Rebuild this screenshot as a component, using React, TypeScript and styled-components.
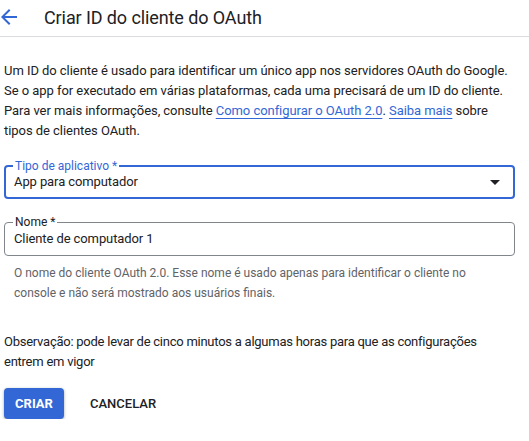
import styled, { createGlobalStyle } from 'styled-components';

const GlobalStyle = createGlobalStyle`
  html, body {
    margin: 0;
    padding: 0;
    background: #fff;
  }
  body {
    font-family: Roboto, "Liberation Sans", Arial, sans-serif;
    color: #202124;
    -webkit-font-smoothing: antialiased;
  }
`;

const Header = styled.header`
  display: flex;
  align-items: center;
  height: 37px;
  border-bottom: 1px solid #dadce0;
  box-sizing: border-box;
  padding-bottom: 2px;
`;

const BackButton = styled.button`
  display: flex;
  align-items: center;
  justify-content: center;
  width: 18px;
  height: 24px;
  padding: 0;
  margin: 0 26px 0 0;
  border: none;
  background: transparent;
  cursor: pointer;
`;

const Title = styled.h1`
  margin: 0;
  font-size: 18px;
  font-weight: 400;
  letter-spacing: -0.1px;
  color: #202124;
`;

const Content = styled.main`
  padding: 24px 14px 0 4px;
`;

const Intro = styled.p`
  margin: 0;
  font-size: 13px;
  line-height: 20px;
  letter-spacing: -0.05px;
  color: #202124;
`;

const Link = styled.a`
  color: #3367d6;
  text-decoration: underline;
  text-underline-offset: 3px;
  text-decoration-thickness: 1px;
`;

const Field = styled.div<{ $focused?: boolean; $top: number }>`
  position: relative;
  display: flex;
  align-items: center;
  box-sizing: border-box;
  height: 34px;
  margin-top: ${p => p.$top}px;
  padding: 0 13px 0 ${p => (p.$focused ? 8 : 9)}px;
  border: ${p => (p.$focused ? '2px solid #3367d6' : '1px solid #80868b')};
  border-radius: 4px;
  font-size: 13px;
  letter-spacing: -0.1px;
  color: #202124;
`;

const FieldLabel = styled.span<{ $focused?: boolean }>`
  position: absolute;
  top: -8px;
  left: ${p => (p.$focused ? 7 : 8)}px;
  padding: 0 2px;
  background: #fff;
  font-size: 12px;
  line-height: 14px;
  letter-spacing: 0;
  color: ${p => (p.$focused ? '#3367d6' : '#202124')};
`;

const FieldValue = styled.span`
  flex: 1;
  line-height: 20px;
`;

const Caret = styled.span`
  width: 0;
  height: 0;
  border-left: 5px solid transparent;
  border-right: 5px solid transparent;
  border-top: 5px solid #202124;
`;

const Helper = styled.p`
  margin: 7px 0 0;
  padding: 0 40px 0 10px;
  font-size: 12px;
  line-height: 20px;
  color: #5f6368;
`;

const Note = styled.p`
  margin: 29px 0 0;
  font-size: 13px;
  line-height: 20px;
  letter-spacing: -0.25px;
  color: #202124;
`;

const Actions = styled.div`
  display: flex;
  align-items: center;
  gap: 18px;
  margin-top: 16px;
`;

const Button = styled.button<{ $primary?: boolean }>`
  height: 31px;
  min-width: ${p => (p.$primary ? 60 : 0)}px;
  padding: 0 8px;
  border: none;
  border-radius: 4px;
  font-family: Roboto, "Liberation Sans", Arial, sans-serif;
  font-size: 13px;
  font-weight: ${p => (p.$primary ? 700 : 500)};
  text-transform: uppercase;
  cursor: pointer;
  background: ${p => (p.$primary ? '#3367d6' : 'transparent')};
  color: ${p => (p.$primary ? '#fff' : '#202124')};
  box-shadow: ${p =>
    p.$primary ? '0 1px 2px rgba(60,64,67,0.3), 0 1px 3px 1px rgba(60,64,67,0.15)' : 'none'};
`;

export default function App() {
  return (
    <>
      <GlobalStyle />
      <Header>
        <BackButton aria-label="Voltar">
          <svg width="16" height="16" viewBox="0 0 16 16">
            <path d="M16 7H3.83l5.59-5.59L8 0 0 8l8 8 1.41-1.41L3.83 9H16z" fill="#3367d6" />
          </svg>
        </BackButton>
        <Title>Criar ID do cliente do OAuth</Title>
      </Header>
      <Content>
        <Intro>
          Um ID do cliente é usado para identificar um único app nos servidores OAuth do Google.
          Se o app for executado em várias plataformas, cada uma precisará de um ID do cliente.
          Para ver mais informações, consulte <Link href="#">Como configurar o OAuth 2.0</Link>.{' '}
          <Link href="#">Saiba mais</Link> sobre tipos de clientes OAuth.
        </Intro>

        <Field $focused $top={24}>
          <FieldLabel $focused>Tipo de aplicativo *</FieldLabel>
          <FieldValue>App para computador</FieldValue>
          <Caret />
        </Field>

        <Field $top={23}>
          <FieldLabel>Nome *</FieldLabel>
          <FieldValue>Cliente de computador 1</FieldValue>
        </Field>
        <Helper>
          O nome do cliente OAuth 2.0. Esse nome é usado apenas para identificar o cliente no
          console e não será mostrado aos usuários finais.
        </Helper>

        <Note>
          Observação: pode levar de cinco minutos a algumas horas para que as configurações
          entrem em vigor
        </Note>

        <Actions>
          <Button $primary>Criar</Button>
          <Button>Cancelar</Button>
        </Actions>
      </Content>
    </>
  );
}
